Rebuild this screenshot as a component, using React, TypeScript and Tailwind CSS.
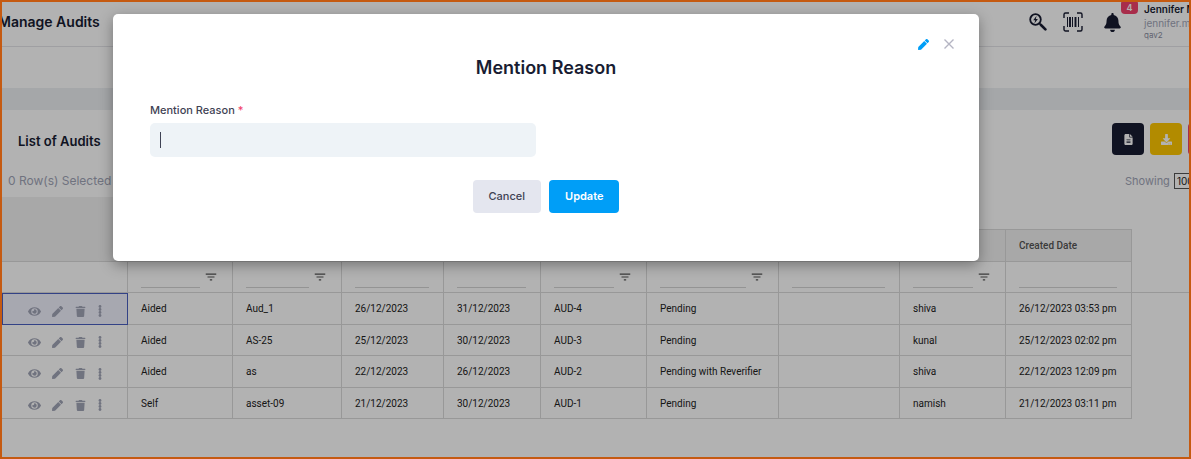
import { FaBell, FaDownload, FaEye, FaPen, FaTrash } from "react-icons/fa";
import { FaFileLines } from "react-icons/fa6";
import { MdFilterList } from "react-icons/md";

type Audit = {
  type: string;
  name: string;
  start: string;
  end: string;
  code: string;
  status: string;
  remark: string;
  user: string;
  created: string;
};

const audits: Audit[] = [
  {
    type: "Aided",
    name: "Aud_1",
    start: "26/12/2023",
    end: "31/12/2023",
    code: "AUD-4",
    status: "Pending",
    remark: "",
    user: "shiva",
    created: "26/12/2023 03:53 pm",
  },
  {
    type: "Aided",
    name: "AS-25",
    start: "25/12/2023",
    end: "30/12/2023",
    code: "AUD-3",
    status: "Pending",
    remark: "",
    user: "kunal",
    created: "25/12/2023 02:02 pm",
  },
  {
    type: "Aided",
    name: "as",
    start: "22/12/2023",
    end: "26/12/2023",
    code: "AUD-2",
    status: "Pending with Reverifier",
    remark: "",
    user: "shiva",
    created: "22/12/2023 12:09 pm",
  },
  {
    type: "Self",
    name: "asset-09",
    start: "21/12/2023",
    end: "30/12/2023",
    code: "AUD-1",
    status: "Pending",
    remark: "",
    user: "namish",
    created: "21/12/2023 03:11 pm",
  },
];

const columns: { key: keyof Audit; width: string; filter?: boolean; title?: string }[] = [
  { key: "type", width: "w-[105px]", filter: true },
  { key: "name", width: "w-[109px]", filter: true },
  { key: "start", width: "w-[102px]" },
  { key: "end", width: "w-[97px]" },
  { key: "code", width: "w-[106px]", filter: true },
  { key: "status", width: "w-[132px]", filter: true },
  { key: "remark", width: "w-[121px]" },
  { key: "user", width: "w-[106px]", filter: true },
  { key: "created", width: "w-[126px]", title: "Created Date" },
];

const SearchBoltIcon = () => (
  <svg viewBox="0 0 18 18" className="h-[18px] w-[18px]" fill="none" stroke="currentColor">
    <circle cx="6.5" cy="6.5" r="5.3" strokeWidth="1.8" />
    <path d="M10.6 10.6l1.2 1.2" strokeWidth="1.8" />
    <path d="M12 12l4.4 4.4" strokeWidth="2.6" strokeLinecap="round" />
    <path d="M7.6 2.8L4.2 7.2h2L5.4 10.4l3.5-4.5H6.8z" fill="currentColor" stroke="none" />
  </svg>
);

const BarcodeIcon = () => (
  <svg viewBox="0 0 20 20" className="h-5 w-5" fill="none" stroke="currentColor">
    <path
      d="M1 6V2.500A1.500 1.500 0 0 1 2.500 1H6M14 1h3.500A1.500 1.500 0 0 1 19 2.500V6M19 14v3.500a1.500 1.500 0 0 1-1.500 1.500H14M6 19H2.500A1.500 1.500 0 0 1 1 17.500V14"
      strokeWidth="1.400"
    />
    <path d="M4.500 5v10M9.500 5v10M15.500 5v10" strokeWidth="1" />
    <path d="M7 5v10M12.500 5v10" strokeWidth="1.900" />
  </svg>
);

const DotsIcon = () => (
  <svg viewBox="0 0 4 12" className="h-3 w-1" fill="currentColor">
    <circle cx="2" cy="1.5" r="1.4" />
    <circle cx="2" cy="4.500" r="1.4" />
    <circle cx="2" cy="7.500" r="1.4" />
    <circle cx="2" cy="10.500" r="1.4" />
  </svg>
);

const Header = () => (
  <header className="flex h-[45px] justify-between border-b border-[#e4e4e8]">
    <h1 className="-ml-1 mt-2.5 text-[14px] font-semibold leading-5 text-[#181c32]">Manage Audits</h1>
    <div className="flex w-40 shrink-0 text-[#181c32]">
      <button aria-label="Quick search" className="mt-0.5 flex h-9 w-[34px] shrink-0 items-center">
        <SearchBoltIcon />
      </button>
      <button aria-label="Scan barcode" className="mt-0.5 flex h-9 w-10 shrink-0 items-center">
        <BarcodeIcon />
      </button>
      <button aria-label="Notifications" className="relative mt-0.5 flex h-9 w-[41px] shrink-0 items-center">
        <FaBell className="size-[19px]" />
        <span className="absolute -top-1 left-[18px] h-3.5 w-[17px] rounded-sm bg-[#f1416c] text-[9px] font-semibold leading-[15px] text-white">
          4
        </span>
      </button>
      <div className="whitespace-nowrap">
        <div className="text-[10px] font-semibold leading-[14px]">Jennifer M</div>
        <div className="text-[10px] leading-[15px] text-[#a1a5b7]">jennifer.m</div>
        <div className="text-[8px] leading-[9px] text-[#8b8fa3]">qav2</div>
      </div>
    </div>
  </header>
);

const Toolbar = () => (
  <>
    <div className="flex items-center justify-between pt-[13px]">
      <h2 className="pl-4 pt-1 text-[13px] font-semibold leading-7 text-[#181c32]">List of Audits</h2>
      <div className="flex w-[77px] shrink-0 gap-1.5 text-white">
        <button
          aria-label="Export file"
          className="flex h-8 w-8 shrink-0 items-center justify-center rounded bg-[#181c32]"
        >
          <FaFileLines className="size-[11px]" />
        </button>
        <button
          aria-label="Download"
          className="flex h-8 w-8 shrink-0 items-center justify-center rounded bg-[#ffc700]"
        >
          <FaDownload className="size-[11px]" />
        </button>
        <button aria-label="Delete" className="h-8 w-8 shrink-0 rounded bg-[#f1416c]" />
      </div>
    </div>
    <div className="flex h-[42px] items-center justify-between pt-2.5 text-[#a1a5b7]">
      <span className="pl-1.5 text-[12px]">0 Row(s) Selected</span>
      <label className="flex w-16 shrink-0 items-center gap-1 whitespace-nowrap text-[11px]">
        Showing
        <select className="h-4 w-12 shrink-0 appearance-none border border-[#555] pl-0.5 text-[10px] leading-3 text-[#222]">
          <option>100</option>
        </select>
      </label>
    </div>
  </>
);

const AuditTable = () => (
  <table className="w-full table-fixed border-separate border-spacing-0 font-[Roboto,sans-serif] text-[10px] text-[#222]">
    <colgroup>
      <col className="w-[126px]" />
      {columns.map((c) => (
        <col key={c.key} className={c.width} />
      ))}
      <col />
    </colgroup>
    <thead>
      <tr className="h-8">
        <th rowSpan={2} className="border-b border-r border-[#dadada] bg-[#f1f1f1]" />
        <th colSpan={10} />
      </tr>
      <tr className="h-[33px]">
        {columns.map((c) => (
          <th
            key={c.key}
            className="border-b border-r border-t border-[#dadada] bg-[#f1f1f1] p-0 pl-[13px] text-left font-medium text-[#555]"
          >
            {c.title}
          </th>
        ))}
        <th />
      </tr>
      <tr className="h-[31px]">
        <td className="border-b border-r border-[#dadada]" />
        {columns.map((c) => (
          <td key={c.key} className="border-b border-r border-[#dadada] p-0 pl-[13px] pr-3.5">
            <div className="flex items-center">
              <input
                aria-label={`Filter ${c.key}`}
                className="h-[21px] w-full min-w-0 flex-1 border-b border-[#d4d4d4] outline-none"
              />
              {c.filter && (
                <button aria-label="Filter options" className="ml-1">
                  <MdFilterList className="size-3.5 text-[#555]" />
                </button>
              )}
            </div>
          </td>
        ))}
        <td className="border-b border-[#dadada]" />
      </tr>
    </thead>
    <tbody>
      {audits.map((audit, i) => (
        <tr key={audit.code} className="odd:h-8 even:h-[31px]">
          <td
            className={
              i === 0
                ? "border border-[#4a5fc1] bg-[#f0f1fd] p-0 pl-[25px]"
                : "border-b border-r border-[#dadada] p-0 pl-[26px]"
            }
          >
            <div className="flex items-center pt-1 text-[#a1a5b7]">
              <button aria-label="View" className="w-6">
                <FaEye className="size-[13px]" />
              </button>
              <button aria-label="Edit" className="w-[23px]">
                <FaPen className="size-[11px]" />
              </button>
              <button aria-label="Delete" className="w-[23px]">
                <FaTrash className="size-[11px]" />
              </button>
              <button aria-label="More">
                <DotsIcon />
              </button>
            </div>
          </td>
          {columns.map((c) => (
            <td key={c.key} className="whitespace-nowrap border-b border-r border-[#dadada] p-0 pl-[13px]">
              {audit[c.key]}
            </td>
          ))}
          <td />
        </tr>
      ))}
    </tbody>
  </table>
);

const ReasonModal = () => (
  <div className="absolute inset-0 bg-black/30 pl-[111px] pt-3">
    <form
      role="dialog"
      aria-labelledby="reason-title"
      className="w-full max-w-[866px] rounded-[5px] bg-white px-[37px] pb-12 pt-6 shadow-[0_4px_14px_rgba(0,0,0,0.35)]"
    >
      <div className="-mr-3 flex h-3 items-center justify-end gap-[15px]">
        <button type="button" aria-label="Edit" className="text-[#009ef7]">
          <FaPen className="size-[11px]" />
        </button>
        <button type="button" aria-label="Close" className="text-[#b5b5c3]">
          <svg viewBox="0 0 10 10" className="size-2.5" stroke="currentColor" strokeWidth="1.4">
            <path d="M0.500 0.500l9 9M9.500 0.500l-9 9" />
          </svg>
        </button>
      </div>
      <h2 id="reason-title" className="mt-1.5 text-center text-lg font-semibold leading-6 text-[#181c32]">
        Mention Reason
      </h2>
      <label htmlFor="reason" className="mt-[22px] block text-[11px] font-medium leading-4 text-[#3f4254]">
        Mention Reason <span className="text-[#f1416c]">*</span>
      </label>
      <div className="mt-[5px] flex h-[34px] max-w-[386px] items-center rounded-[5px] bg-[#eef3f7] px-2.5">
        <span className="h-4 w-px bg-[#3f4254]" />
        <input id="reason" className="h-full flex-1 text-[11px] caret-transparent outline-none" />
      </div>
      <div className="mt-[23px] flex justify-center gap-2 text-[11px] leading-[33px]">
        <button type="button" className="rounded bg-[#e4e6ef] px-4 font-medium text-[#3f4254]">
          Cancel
        </button>
        <button type="submit" className="rounded bg-[#009ef7] px-4 font-semibold text-white">
          Update
        </button>
      </div>
    </form>
  </div>
);

export default function App() {
  return (
    <div className="relative min-h-screen overflow-hidden border-2 border-[#c55a11] bg-white font-[Inter,sans-serif]">
      <Header />
      <div className="h-[41px]" />
      <div className="h-[22px] bg-[#edf0f2]" />
      <Toolbar />
      <AuditTable />
      <ReasonModal />
    </div>
  );
}
